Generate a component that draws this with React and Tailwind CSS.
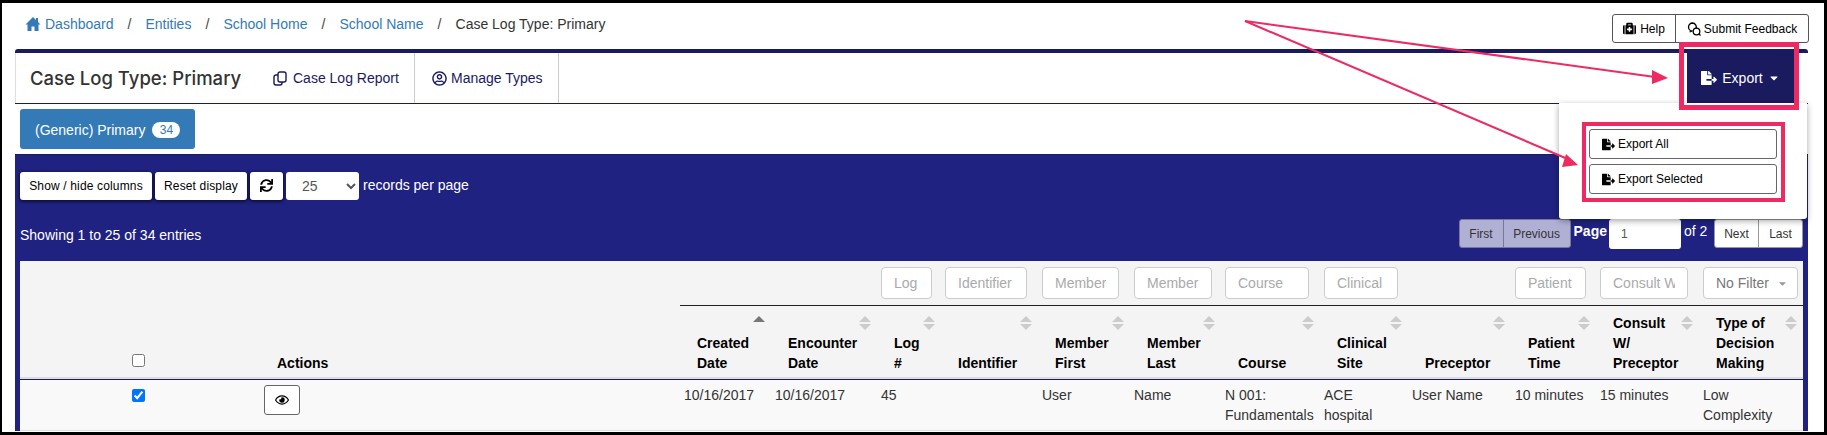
import React from "react";
import {
  FaRegUserCircle,
  FaSync,
  FaFileExport,
  FaMedkit,
  FaRegEye,
  FaCaretDown,
} from "react-icons/fa";

const colWidths = [236, 424, 91, 106, 64, 97, 92, 91, 99, 88, 103, 85, 103, 104];

const filters = [
  null,
  null,
  null,
  null,
  { w: "w-[51px]", text: "Log" },
  { w: "w-[82px]", text: "Identifier" },
  { w: "w-[77px]", text: "Member" },
  { w: "w-[78px]", text: "Member" },
  { w: "w-[84px]", text: "Course" },
  { w: "w-[74px]", text: "Clinical" },
  null,
  { w: "w-[71px]", text: "Patient" },
  { w: "w-[88px]", text: "Consult With" },
];

const headers = [
  { lines: ["Created", "Date"], sort: "up" },
  { lines: ["Encounter", "Date"] },
  { lines: ["Log", "#"] },
  { lines: ["Identifier"] },
  { lines: ["Member", "First"] },
  { lines: ["Member", "Last"] },
  { lines: ["Course"] },
  { lines: ["Clinical", "Site"] },
  { lines: ["Preceptor"] },
  { lines: ["Patient", "Time"] },
  { lines: ["Consult", "W/", "Preceptor"] },
  { lines: ["Type of", "Decision", "Making"] },
];

const row = [
  "10/16/2017",
  "10/16/2017",
  "45",
  "",
  "User",
  "Name",
  "N 001: Fundamentals",
  "ACE hospital",
  "User Name",
  "10 minutes",
  "15 minutes",
  "Low Complexity",
];

const crumbs = ["Dashboard", "Entities", "School Home", "School Name"];

const HomeIcon = () => (
  <svg width="16" height="16" viewBox="0 0 16 16" className="mr-[4px]" fill="#337ab7">
    <path d="M8 1 L0.5 8.5 H2.5 V15 H6.5 V10.5 H9.5 V15 H13.5 V8.5 H15.5 L13 6 V2 H11 V4 Z" />
  </svg>
);

const CopyIcon = () => (
  <svg width="14" height="15" viewBox="0 0 14 15" fill="none" stroke="#1a1a5e" strokeWidth="1.4">
    <rect x="5" y="1" width="8" height="10" rx="2" />
    <path d="M5 4 H3 A2 2 0 0 0 1 6 V12 A2 2 0 0 0 3 14 H7 A2 2 0 0 0 9 12 V11" />
  </svg>
);

const FeedbackIcon = () => (
  <svg width="14" height="14" viewBox="0 0 14 14" fill="none" stroke="black" strokeWidth="1.3">
    <path d="M5.5 1 A4 4 0 1 0 5.5 9 L2.5 10 M5.5 1 A4 4 0 0 1 9 6.5" />
    <circle cx="9.5" cy="9.5" r="3.3" />
    <path d="M12 12 L13.5 13.5" />
  </svg>
);

const SortIcon = ({ asc }) => (
  <svg width="12" height="16" viewBox="0 0 12 16" className="absolute top-[9px] right-[6px]">
    <path d="M6 1 L12 7 L0 7 Z" fill={asc ? "#777777" : "#cccccc"} />
    {!asc && <path d="M0 9 L12 9 L6 15 Z" fill="#cccccc" />}
  </svg>
);

const ToolButton = ({ className, children }) => (
  <button className={`h-7 rounded-[3px] bg-white pb-[1px] text-xs tracking-[0.15px] text-black shadow-[0_1px_3px_1px_rgba(0,0,0,0.55)] ${className}`}>
    {children}
  </button>
);

const App = () => {
  return (
    <div className="relative h-[435px] w-[1827px] overflow-hidden border-t-[3px] border-r-[3px] border-b-[3px] border-l-[2px] border-black bg-white font-['Liberation_Sans',Arial,sans-serif] text-sm text-[#333333]">
      {/* breadcrumb + help */}
      <div className="flex h-[46px] items-start justify-between pr-[15px] pl-[23px]">
        <div className="flex items-center pt-[13px] leading-4">
          <HomeIcon />
          {crumbs.map((c) => (
            <React.Fragment key={c}>
              <a className="text-[#337ab7]">{c}</a>
              <span className="w-[32px] text-center text-[#444444]">/</span>
            </React.Fragment>
          ))}
          <span className="text-[#333333]">Case Log Type: Primary</span>
        </div>
        <div className="mt-[11px] flex h-[29px] w-[197px] rounded-[3px] border border-[#555555] text-xs text-black">
          <button className="flex w-[63px] items-center justify-center gap-[4px] border-r border-[#555555]">
            <FaMedkit className="text-[13px]" />
            Help
          </button>
          <button className="flex flex-1 items-center justify-center gap-[3px]">
            <FeedbackIcon />
            Submit Feedback
          </button>
        </div>
      </div>

      {/* panel */}
      <div className="relative ml-[13px] mr-[16px] rounded-t-[3px] border-t-[4px] border-[#1a1a5e]">
        <div className="flex h-[51px] items-stretch justify-between border-b border-[#1a1a5e]">
          <div className="flex items-stretch border-l border-[#dddddd]">
            <div className="flex w-[243px] items-center pl-[14px] font-['Inter',sans-serif] text-[18.5px] font-medium whitespace-nowrap text-[#333333]">
              Case Log Type: Primary
            </div>
            <div className="flex w-[156px] items-center gap-[6px] border-r border-[#cccccc] pl-[14px] whitespace-nowrap text-[#1a1a5e]">
              <CopyIcon />
              Case Log Report
            </div>
            <div className="flex w-[144px] items-center gap-[4px] border-r border-[#cccccc] pl-[17px] whitespace-nowrap text-[#1a1a5e]">
              <FaRegUserCircle className="text-[15px]" />
              Manage Types
            </div>
          </div>
          <div className="mr-[14px] flex w-[107px] items-center justify-center gap-[5px] bg-[#1a1a5e] text-white">
            <FaFileExport className="text-[16px]" />
            Export
            <FaCaretDown className="text-[12px]" />
          </div>
        </div>

        <div className="h-[50px] pt-[5px] pl-[5px]">
          <div className="flex h-[40px] w-[175px] items-center rounded-[3px] bg-[#337ab7] pt-[1px] pl-[15px] text-white">
            (Generic) Primary
            <span className="ml-[7px] flex h-[16px] w-[28px] items-center justify-center rounded-full bg-white text-xs text-[#337ab7]">
              34
            </span>
          </div>
        </div>

        <div className="border-t border-[#1a1a5e] bg-[#1f2280] px-[5px] pt-[17px] text-white">
          <div className="flex h-7 items-center gap-[3px]">
            <ToolButton className="w-[132px]">Show / hide columns</ToolButton>
            <ToolButton className="w-[92px]">Reset display</ToolButton>
            <ToolButton className="flex w-[33px] items-center justify-center">
              <FaSync className="text-[13px]" />
            </ToolButton>
            <select className="h-7 w-[73px] rounded-[3px] bg-white pl-[12px] text-[#555555]" defaultValue="25">
              <option>25</option>
            </select>
            <span className="ml-[1px] pb-[2px]">records per page</span>
          </div>

          <div className="mt-[19px] mb-[13px] flex h-[29px] items-center justify-between">
            <span className="pt-[3px]">Showing 1 to 25 of 34 entries</span>
            <div className="flex h-[29px] items-start text-xs">
              <div className="flex h-[29px] rounded-[3px] border border-[#777799] bg-[#b0b0d5] text-[#333333]">
                <span className="flex w-[44px] items-center justify-center border-r border-[#777799]">First</span>
                <span className="flex w-[66px] items-center justify-center">Previous</span>
              </div>
              <span className="ml-[3px] text-sm leading-6 font-bold">Page</span>
              <input
                readOnly
                value="1"
                className="ml-[2px] h-[30px] w-[72px] rounded-[3px] bg-white pl-[12px] text-xs text-[#555555]"
              />
              <span className="ml-[3px] w-[30px] text-sm leading-6">of 2</span>
              <div className="flex h-[29px] rounded-[3px] border border-[#999999] bg-white text-[#333333]">
                <span className="flex w-[44px] items-center justify-center border-r border-[#999999]">Next</span>
                <span className="flex w-[43px] items-center justify-center">Last</span>
              </div>
            </div>
          </div>

          <table className="w-[1783px] table-fixed border-separate border-spacing-0 bg-[#f4f4f4] text-left text-[#333333]">
            <colgroup>
              {colWidths.map((w, i) => (
                <col key={i} style={{ width: w }} />
              ))}
            </colgroup>
            <thead>
              <tr>
                <td colSpan={2} className="h-[44px]" />
                {filters.slice(2).map((f, i) => (
                  <td key={i} className="border-b border-[#222222] pt-[6px] pb-[6px] pl-1 align-top">
                    {f && (
                      <input
                        placeholder={f.text}
                        className={`block h-[32px] rounded-[4px] border border-[#cccccc] bg-white px-[12px] text-sm placeholder:text-[#aaaaaa] ${f.w}`}
                      />
                    )}
                  </td>
                ))}
                <td className="border-b border-[#222222] pt-[6px] pb-[6px] pl-1 align-top">
                  <div className="flex h-[32px] w-[95px] items-center gap-[8px] rounded-[4px] border border-[#cccccc] bg-white pl-[12px] text-[#777777]">
                    No Filter
                    <FaCaretDown className="text-[11px] text-[#999999]" />
                  </div>
                </td>
              </tr>
              <tr className="text-black">
                <th className="border-b-2 border-[#dddddd] pb-[4px] align-bottom">
                  <input type="checkbox" className="mx-auto mb-[6px] block" />
                </th>
                <th className="border-b-2 border-[#dddddd] pb-[4px] pl-[21px] align-bottom leading-5">Actions</th>
                {headers.map((h, i) => (
                  <th
                    key={i}
                    className="relative border-b-2 border-[#dddddd] pt-[7px] pb-[4px] pl-[17px] align-bottom leading-5"
                  >
                    <SortIcon asc={h.sort === "up"} />
                    {h.lines.map((l) => (
                      <div key={l}>{l}</div>
                    ))}
                  </th>
                ))}
              </tr>
            </thead>
            <tbody className="bg-[#f9f9f9]">
              <tr>
                <td className="border-t border-b border-t-[#1a1a5e] border-b-[#dddddd] pt-[5px] pb-[5px] align-top">
                  <input type="checkbox" readOnly checked className="mx-auto mt-1 block" />
                </td>
                <td className="border-t border-b border-t-[#1a1a5e] border-b-[#dddddd] pt-[5px] pb-[5px] pl-2 align-top">
                  <button className="flex h-[30px] w-[36px] items-center justify-center rounded-[3px] border border-[#666666] bg-white text-black">
                    <FaRegEye className="text-[14px]" />
                  </button>
                </td>
                {row.map((cell, i) => (
                  <td
                    key={i}
                    className="border-t border-b border-t-[#1a1a5e] border-b-[#dddddd] pt-[5px] pr-[8px] pb-[5px] pl-1 align-top leading-5"
                  >
                    {cell}
                  </td>
                ))}
              </tr>
            </tbody>
          </table>
        </div>

        {/* export dropdown */}
        <div className="absolute top-[50px] right-[1px] flex h-[116px] w-[248px] flex-col gap-[5px] rounded-b-[3px] bg-white pt-[26px] pl-[30px] text-xs text-black shadow-[0_2px_6px_rgba(0,0,0,0.35)]">
          <button className="flex h-[30px] w-[188px] items-center gap-[3px] rounded-[3px] border border-[#666666] pl-[12px]">
            <FaFileExport className="text-[13px]" />
            Export All
          </button>
          <button className="flex h-[30px] w-[188px] items-center gap-[3px] rounded-[3px] border border-[#666666] pl-[12px]">
            <FaFileExport className="text-[13px]" />
            Export Selected
          </button>
        </div>
      </div>

      {/* pink annotations */}
      <div className="absolute top-[39px] left-[1677px] h-[68px] w-[120px] border-[5px] border-[#ee2a62]" />
      <div className="absolute top-[119px] left-[1580px] h-[80px] w-[203px] border-[4px] border-[#ee2a62]" />
      <svg width="1827" height="435" className="absolute -top-[3px] -left-[2px]">
        <path d="M1245 21 L1655 77" stroke="#ee2a62" strokeWidth="2" />
        <path d="M1245 21 L1570 160" stroke="#ee2a62" strokeWidth="2" />
        <path d="M1668 78 L1652 70 L1652 84 Z" fill="#ee2a62" />
        <path d="M1578 165 L1566 154 L1562 167 Z" fill="#ee2a62" />
      </svg>
    </div>
  );
};

export default App;
